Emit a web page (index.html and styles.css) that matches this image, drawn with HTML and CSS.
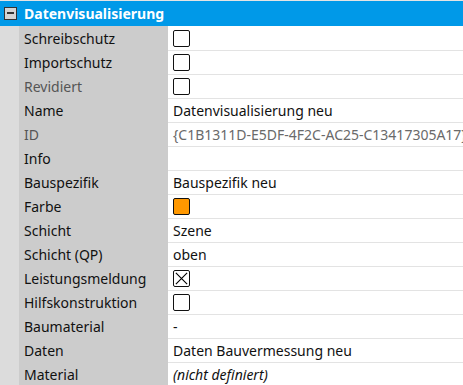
FILE: index.html
```
<!DOCTYPE html>
<html lang="de">
<head>
    <meta charset="UTF-8">
    <meta name="viewport" content="width=device-width, initial-scale=1.0">
    <title>Datenvisualisierung</title>
    <link rel="stylesheet" href="styles.css">
</head>
<body>

    <div class="panel">
        <div class="group-head">
            <span class="toggle"></span>
            <span class="group-title">Datenvisualisierung</span>
        </div>

        <div class="row">
            <div class="label">Schreibschutz</div>
            <div class="value"><span class="check"></span></div>
        </div>
        <div class="row">
            <div class="label">Importschutz</div>
            <div class="value"><span class="check"></span></div>
        </div>
        <div class="row">
            <div class="label muted">Revidiert</div>
            <div class="value"><span class="check"></span></div>
        </div>
        <div class="row">
            <div class="label">Name</div>
            <div class="value">Datenvisualisierung neu</div>
        </div>
        <div class="row">
            <div class="label muted">ID</div>
            <div class="value readonly">{C1B1311D-E5DF-4F2C-AC25-C13417305A17}</div>
        </div>
        <div class="row">
            <div class="label">Info</div>
            <div class="value"></div>
        </div>
        <div class="row">
            <div class="label">Bauspezifik</div>
            <div class="value">Bauspezifik neu</div>
        </div>
        <div class="row">
            <div class="label">Farbe</div>
            <div class="value"><span class="swatch"></span></div>
        </div>
        <div class="row">
            <div class="label">Schicht</div>
            <div class="value">Szene</div>
        </div>
        <div class="row">
            <div class="label">Schicht (QP)</div>
            <div class="value">oben</div>
        </div>
        <div class="row">
            <div class="label">Leistungsmeldung</div>
            <div class="value">
                <span class="check checked">
                    <svg width="16" height="16" viewBox="0 0 16 16"><path d="M2 2L14 14M14 2L2 14" stroke="#000" stroke-width="1.2"/></svg>
                </span>
            </div>
        </div>
        <div class="row">
            <div class="label">Hilfskonstruktion</div>
            <div class="value"><span class="check"></span></div>
        </div>
        <div class="row">
            <div class="label">Baumaterial</div>
            <div class="value">-</div>
        </div>
        <div class="row">
            <div class="label">Daten</div>
            <div class="value">Daten Bauvermessung neu</div>
        </div>
        <div class="row">
            <div class="label">Material</div>
            <div class="value undefined">(nicht definiert)</div>
        </div>
    </div>

</body>
</html>
```

FILE: styles.css
```
* {
    margin: 0;
    padding: 0;
    box-sizing: border-box;
}

body {
    font-family: "Noto Sans", "Open Sans", sans-serif;
    font-size: 14px;
    color: #111;
    background-color: #dcdcdc;
    overflow: hidden;
}

.panel {
    width: 463px;
}

.group-head {
    display: flex;
    align-items: center;
    height: 26px;
    border-top: 1px solid #e4e4e4;
    background-color: #0099e8;
    color: #fff;
    padding-left: 4px;
}

.toggle {
    position: relative;
    width: 13px;
    height: 13px;
    margin-right: 7px;
    border: 1px solid #333;
    background-color: #d4d4d4;
}

.toggle::after {
    content: "";
    position: absolute;
    left: 2px;
    right: 2px;
    top: 4px;
    height: 2px;
    background-color: #333;
}

.group-title {
    font-weight: bold;
    font-size: 14px;
}

.row {
    display: grid;
    grid-template-columns: 19px 149px 1fr;
    height: 24px;
}

.label {
    grid-column: 2;
    display: flex;
    align-items: center;
    padding-left: 5px;
    background-color: #cccccc;
    white-space: nowrap;
}

.label.muted {
    color: #555;
}

.value {
    display: flex;
    align-items: center;
    padding-left: 5px;
    background-color: #fff;
    border-top: 1px solid #e3e3e3;
    white-space: nowrap;
    overflow: hidden;
}

.row:nth-child(2) .value {
    border-top-color: #fff;
}

.value.readonly {
    color: #6a6a6a;
}

.value.undefined {
    font-style: italic;
}

.check {
    display: block;
    width: 17px;
    height: 17px;
    border: 1px solid #111;
    border-radius: 2px;
    background-color: #fff;
}

.check svg {
    display: block;
    width: 15px;
    height: 15px;
}

.swatch {
    display: block;
    width: 17px;
    height: 17px;
    border: 1px solid #111;
    border-radius: 2px;
    background-color: #ff9800;
}
```
